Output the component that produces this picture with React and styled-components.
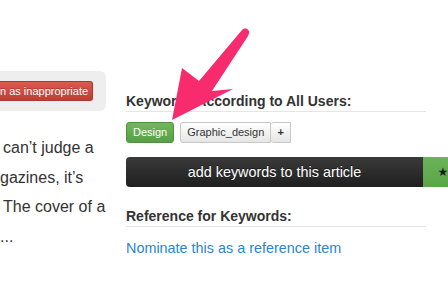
import styled, { createGlobalStyle } from "styled-components";

const GlobalStyle = createGlobalStyle`
  body {
    margin: 0;
    background: #ffffff;
    overflow: hidden;
    font-family: "Liberation Sans", Arial, sans-serif;
  }
`;

export default function App() {
  return (
    <Page>
      <GlobalStyle />
      <LeftCol>
        <FlagPanel>
          <FlagButton>n as inappropriate</FlagButton>
        </FlagPanel>
        <Excerpt>
          <Line shift={3}>can’t judge a</Line>
          <Line shift={0}>gazines, it’s</Line>
          <Line shift={3}>The cover of a</Line>
          <Line shift={0}>...</Line>
        </Excerpt>
      </LeftCol>

      <RightCol>
        <SectionTitle>Keywords According to All Users:</SectionTitle>
        <TagRow>
          <Tag green>Design</Tag>
          <TagGroup>
            <Tag>Graphic_design</Tag>
            <PlusTag>+</PlusTag>
          </TagGroup>
        </TagRow>
        <AddBar>
          <AddButton>add keywords to this article</AddButton>
          <StarButton>★</StarButton>
        </AddBar>
        <SectionTitle top={21}>Reference for Keywords:</SectionTitle>
        <Nominate href="#">Nominate this as a reference item</Nominate>
      </RightCol>

      <Arrow viewBox="0 0 448 296">
        <path
          d="M172 120 L182 68 L199 81 L242 30 Q246 26 249 31 Q250 33 248 36 L212 91 L233 89 Z"
          fill="#f72b6d"
        />
      </Arrow>
    </Page>
  );
}

const Page = styled.div`
  position: relative;
  display: flex;
  width: 448px;
  height: 296px;
  overflow: hidden;
`;

const LeftCol = styled.div`
  width: 106px;
  flex-shrink: 0;
  padding-top: 71px;
`;

const FlagPanel = styled.div`
  height: 40px;
  background: #eeeeee;
  border-radius: 0 6px 6px 0;
  display: flex;
  align-items: center;
  padding-right: 13px;
`;

const FlagButton = styled.div`
  width: 93px;
  height: 20px;
  box-sizing: border-box;
  padding-right: 6px;
  border: 1px solid #a9382e;
  border-left: none;
  border-radius: 0 3px 3px 0;
  background: linear-gradient(#d95b4f, #bd3e33);
  color: #ffffff;
  font-size: 11px;
  line-height: 18px;
  text-align: right;
  white-space: nowrap;
  text-shadow: 0 -1px 0 rgba(0, 0, 0, 0.25);
`;

const Excerpt = styled.div`
  margin-top: 22px;
  font-size: 16px;
  line-height: 29.5px;
  color: #333333;
  white-space: nowrap;
`;

const Line = styled.div`
  margin-left: ${(p) => p.shift}px;
`;

const RightCol = styled.div`
  flex-shrink: 0;
  width: 340px;
  margin-left: 20px;
  padding-top: 93px;
`;

const SectionTitle = styled.div`
  width: 300px;
  margin-top: ${(p) => p.top || 0}px;
  padding-bottom: 1px;
  border-bottom: 1px solid #e6e6e6;
  font-size: 14px;
  font-weight: bold;
  line-height: 17px;
  color: #333333;
`;

const TagRow = styled.div`
  display: flex;
  gap: 6px;
  margin-top: 10px;
  height: 21px;
`;

const Tag = styled.div`
  height: 21px;
  box-sizing: border-box;
  padding: 0 6px;
  border: 1px solid ${(p) => (p.green ? "#4f9140" : "#c8c8c8")};
  border-radius: 3px;
  background: ${(p) =>
    p.green
      ? "linear-gradient(#70b65d, #57a045)"
      : "linear-gradient(#ffffff, #e6e6e6)"};
  color: ${(p) => (p.green ? "#ffffff" : "#333333")};
  font-size: 11px;
  line-height: 19px;
  white-space: nowrap;
`;

const TagGroup = styled.div`
  display: flex;

  & > ${Tag} {
    border-radius: 3px 0 0 3px;
  }
`;

const PlusTag = styled(Tag)`
  width: 20px;
  padding: 0;
  border-left: none;
  border-radius: 0 3px 3px 0;
  text-align: center;
  font-weight: bold;
`;

const AddBar = styled.div`
  display: flex;
  margin-top: 14px;
  height: 30px;
`;

const AddButton = styled.div`
  width: 297px;
  box-sizing: border-box;
  border-radius: 4px 0 0 4px;
  background: linear-gradient(#3a3a3a, #1f1f1f);
  color: #ffffff;
  font-size: 14.4px;
  line-height: 30px;
  text-align: center;
  text-shadow: 0 -1px 0 rgba(0, 0, 0, 0.5);
`;

const StarButton = styled.div`
  width: 40px;
  background: linear-gradient(#6cb35a, #5aa548);
  color: #1a1a1a;
  font-family: "DejaVu Sans", sans-serif;
  font-size: 12px;
  line-height: 30px;
  text-align: center;
`;

const Nominate = styled.a`
  display: block;
  margin-top: 13px;
  font-size: 14.4px;
  line-height: 17px;
  color: #2d85cc;
  text-decoration: none;
`;

const Arrow = styled.svg`
  position: absolute;
  left: 0;
  top: 0;
  width: 448px;
  height: 296px;
  pointer-events: none;
`;
